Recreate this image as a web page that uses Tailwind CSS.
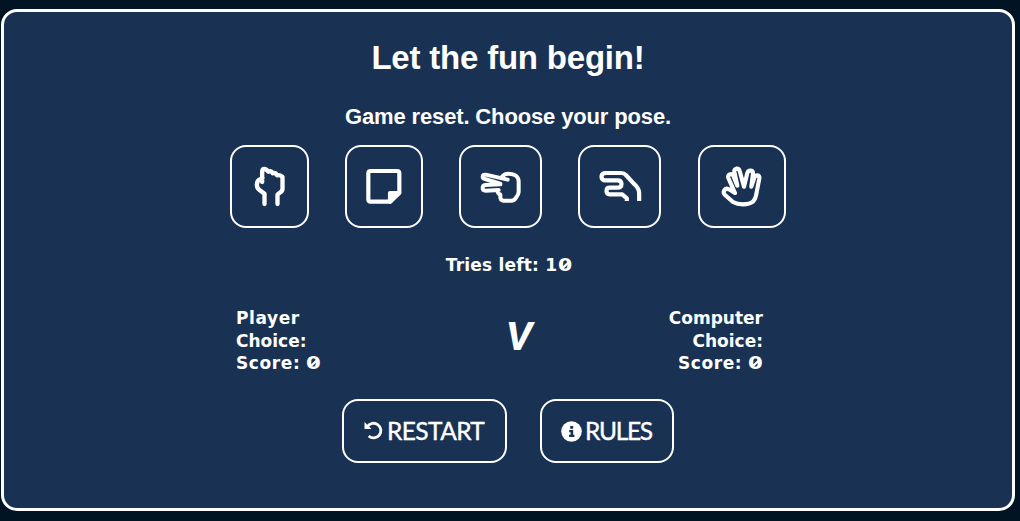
<!DOCTYPE html>
<html lang="en">
<head>
<meta charset="utf-8">
<title>Let the fun begin!</title>
<script src="https://cdn.jsdelivr.net/npm/@tailwindcss/browser@4"></script>
</head>
<body class="h-[521px] overflow-hidden bg-[#011424] pt-[9px] pl-px font-['Liberation_Sans',sans-serif] text-white">
<main class="flex h-[502px] w-[1014px] flex-col items-center rounded-2xl border-3 border-white bg-[#193152]">
  <h1 class="mt-[26px] h-10 text-[33px] leading-10 font-bold tracking-[-0.2px] whitespace-nowrap">Let the fun begin!</h1>
  <h2 class="mt-[27px] h-6 text-[22px] leading-6 font-bold tracking-[-0.14px] whitespace-nowrap">Game reset. Choose your pose.</h2>

  <div class="mt-[16px] flex h-[83px] gap-9">
    <button aria-label="Rock" class="flex w-[79px] items-center justify-center rounded-2xl border-2 border-white">
      <svg class="size-[50px] shrink-0" viewBox="75.5 81 150 150" fill="none" stroke="#fff" stroke-width="13" stroke-linecap="round" stroke-linejoin="round"><path d="M134 207v-31l-16-12q-7-6-7-15 0-12 11-17l6-3M127 141v-31q0-8 7-8 4 0 12 8 8-4 13 5 8-3 13 6 8-2 16 5v35q0 7-7 11l-8 7v28"/></svg>
    </button>
    <button aria-label="Paper" class="flex w-[78px] items-center justify-center rounded-2xl border-2 border-white">
      <svg class="size-[50px] shrink-0" viewBox="73 81 150 150" fill="none" stroke="#fff" stroke-width="12.5" stroke-linejoin="round"><path d="M108 108h79q7 0 7 7v57l-27 28h-59q-7 0-7-7v-78q0-7 7-7Z"/><path d="M166 200v-26h28Z" fill="#fff"/></svg>
    </button>
    <button aria-label="Scissors" class="flex w-[83px] items-center justify-center rounded-2xl border-2 border-white">
      <svg class="size-[50px] shrink-0" viewBox="78 81 150 150" fill="none" stroke="#fff" stroke-width="12" stroke-linecap="round" stroke-linejoin="round"><path d="M173 134l-66-15q-9-1-9 6 0 5 7 7l46 14M151 148l-45 2q-8 1-8 9t9 8l39-2M143 166q-1 9 8 13v8q0 9 9 10h23q10 0 15-9 8-9 8-17v-31q0-14-12-20-7-4-20-4-10 0-17 8"/></svg>
    </button>
    <button aria-label="Lizard" class="flex w-[83px] items-center justify-center rounded-2xl border-2 border-white">
      <svg class="size-[50px] shrink-0" viewBox="76.5 81 150 150" fill="none" stroke="#fff" stroke-width="12.5" stroke-linecap="butt" stroke-linejoin="round"><path d="M172 198v-8l-14-12h-37q-10 0-10-10t10-10h23q12 0 12-11t-12-11h-35q-13 0-13-11t13-11h46q9 0 14 6l26 28q14 13 14 27v23"/></svg>
    </button>
    <button aria-label="Spock" class="ml-px flex w-[88px] items-center justify-center rounded-2xl border-2 border-white">
      <svg class="size-[50px] shrink-0" viewBox="82 81 150 150" fill="none" stroke="#fff" stroke-width="12.5" stroke-linecap="round" stroke-linejoin="round"><path d="M136 174L118 163Q108 158 103 167Q100 173 106 180L130 201Q142 208 160 208Q180 208 190 200Q197 192 199 182L209 130Q210 122 203 121Q196 121 194 128L185 155L190 116Q190 107 182 107Q175 107 173 114L163 155L150 108Q148 100 140 101Q133 103 134 111L143 152L131 122Q127 115 120 118Q114 121 116 129Z"/></svg>
    </button>
  </div>

  <p class="mt-[25px] h-6 font-['DejaVu_Sans',sans-serif] text-[17px] leading-6 font-bold tracking-[0.2px] whitespace-nowrap">Tries left: 1<span class="relative ml-px inline-block origin-left scale-x-120">0<i class="absolute top-[11px] left-[2px] h-[2px] w-[9px] -rotate-50 bg-white"></i></span></p>

  <section class="mt-[30px] mr-[17px] flex h-[68px] w-[527px] justify-between font-['DejaVu_Sans',sans-serif] text-[17px] leading-[22.5px] font-bold">
    <div class="w-[90px] whitespace-nowrap"><span class="tracking-[0.6px]">Player</span><br>Choice:<br><span class="tracking-[0.6px]">Score:</span> <span class="relative inline-block origin-left scale-x-125">0<i class="absolute top-[10px] left-[2px] h-[2px] w-[9px] -rotate-50 bg-white"></i></span></div>
    <div class="ml-[50px] pt-[10px] font-['Roboto',sans-serif] text-[38px] leading-10 font-bold italic"><span class="inline-block scale-x-110">V</span></div>
    <div class="w-[100px] text-right whitespace-nowrap">Computer<br>Choice:<br><span class="tracking-[0.6px]">Score:</span> <span class="relative ml-[3px] inline-block origin-right scale-x-125">0<i class="absolute top-[10px] left-[2px] h-[2px] w-[9px] -rotate-50 bg-white"></i></span></div>
  </section>

  <div class="mt-[24px] flex h-16 gap-[33px] font-['Lato',sans-serif] text-[24.5px] leading-none">
    <button class="flex w-[165px] items-center rounded-2xl border-2 border-white pl-5">
      <svg class="h-5 w-5 shrink-0" viewBox="0 0 20 20" fill="none" stroke="#fff" stroke-width="2.8"><path d="M3.3 5.8A7.3 7.3 0 1 1 4.7 15"/><path d="M.5 1v7h7Z" fill="#fff" stroke="none"/></svg>
      <span class="ml-[3px] tracking-[-0.6px] [-webkit-text-stroke:0.4px_white]">RESTART</span>
    </button>
    <button class="flex w-[134px] items-center rounded-2xl border-2 border-white pl-[19px]">
      <svg class="size-[21px] shrink-0" viewBox="0 0 21 21"><circle cx="10.5" cy="10.5" r="10.3" fill="#fff"/><path d="M9.2 5h3v2.7h-3ZM8.2 9h4v4.8h1.2V16H8v-2.2h1.6v-2.6H8.2Z" fill="#193152"/></svg>
      <span class="ml-[3px] tracking-[-1.3px] [-webkit-text-stroke:0.4px_white]">RULES</span>
    </button>
  </div>
</main>
</body>
</html>
